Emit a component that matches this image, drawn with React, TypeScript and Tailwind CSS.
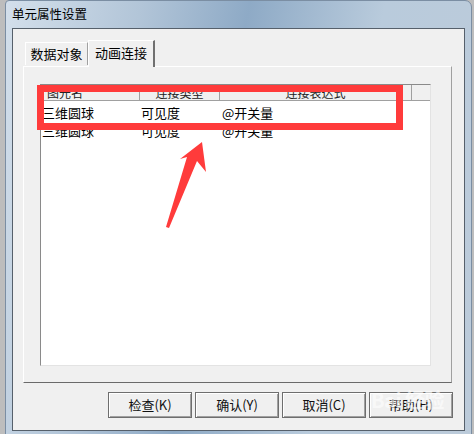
import React from "react";

const cjk = { fontFamily: '"Noto Sans CJK SC", "Liberation Sans", sans-serif' };

const rows = [
  { name: "三维圆球", type: "可见度", expr: "@开关量" },
  { name: "三维圆球", type: "可见度", expr: "@开关量" },
];

function Btn({ label }: { label: string }) {
  return (
    <div className="w-[84px] h-[26px] bg-[#f0f0f0] border border-[#6e6e6e] shadow-[inset_1px_1px_0_#ffffff,inset_-1px_-1px_0_#a0a0a0] flex items-center justify-center text-[13px] text-[#111]">
      {label}
    </div>
  );
}

export default function App() {
  return (
    <div className="w-[474px] h-[434px] bg-[#bdbdbd] overflow-hidden relative" style={cjk}>
      {/* window frame */}
      <div className="ml-[5px] w-[467px] h-[440px] rounded-tr-[7px] rounded-tl-[4px] border border-[#7b8ea3] bg-[linear-gradient(100deg,#d3dfeb_0%,#b2c5d8_25%,#8eaac6_45%,#b9cbdc_70%,#bccbda_100%)] flex flex-col">
        {/* title bar */}
        <div className="h-[27px] pl-[6px] flex items-center text-[12.5px] text-black">单元属性设置</div>

        {/* client area */}
        <div className="mx-[6px] h-[403px] border border-[#56606b] bg-[#f0f0f0] flex flex-col">
          <div className="pt-[11px] px-[10px] flex flex-col">
            {/* tabs */}
            <div className="flex items-end pl-[2px] h-[26px] relative z-10">
              <div className="w-[63px] h-[23px] border-t border-l border-white border-r border-r-[#a0a0a0] bg-[#f0f0f0] flex items-center justify-center text-[13px] mb-[1px]">
                数据对象
              </div>
              <div className="w-[67px] h-[27px] -mb-[1px] border-t border-l border-white border-r-2 border-r-[#707070] bg-[#f0f0f0] flex items-center justify-center text-[13px] pb-[2px]">
                动画连接
              </div>
            </div>
            {/* tab panel */}
            <div className="h-[317px] w-[429px] border-t border-l border-white border-r border-b border-r-[#a0a0a0] border-b-[#6a6a6a] pt-[17px] pl-[16px]">
              {/* list */}
              <div className="w-[391px] h-[282px] border-t border-l border-[#8a8a8a] border-r border-b border-r-[#e3e3e3] border-b-[#e3e3e3] bg-white">
                <div className="flex h-[16px] text-[12px] leading-[16px] text-[#222] bg-[#f0f0f0]">
                  <div className="w-[99px] border-r border-b border-[#a0a0a0] pl-[6px] overflow-hidden">图元名</div>
                  <div className="w-[80px] border-r border-b border-[#a0a0a0] text-center overflow-hidden">连接类型</div>
                  <div className="w-[192px] border-r border-b border-[#a0a0a0] text-center overflow-hidden">连接表达式</div>
                  <div className="flex-1 border-b border-[#a0a0a0]"></div>
                </div>
                <div className="pt-[3px]">
                  {rows.map((r, i) => (
                    <div key={i} className="flex h-[18px] items-center text-[13px] text-black">
                      <div className="w-[100px] pl-[1px]">{r.name}</div>
                      <div className="w-[80px]">{r.type}</div>
                      <div className="pl-[1px]">{r.expr}</div>
                    </div>
                  ))}
                </div>
              </div>
            </div>
          </div>

          {/* buttons */}
          <div className="mt-[9px] pl-[95px] flex gap-[3px]">
            <Btn label="检查(K)" />
            <Btn label="确认(Y)" />
            <Btn label="取消(C)" />
            <div className="relative">
              <Btn label="帮助(H)" />
              <div className="absolute left-[2px] top-[-7px] text-[20px] font-bold text-white/60 tracking-tight pointer-events-none">Bai 经验</div>
            </div>
          </div>
        </div>
      </div>

      {/* annotation overlay */}
      <div className="absolute left-[37px] top-[85px] w-[366px] h-[45px] border-[7px] border-[#ff3b3b]"></div>
      <svg className="absolute left-0 top-0" width="474" height="434">
        <polygon points="202,142 206,172 197,161 169,228 166,227 187,157 180,159" fill="#ff3b3b" />
      </svg>
    </div>
  );
}
